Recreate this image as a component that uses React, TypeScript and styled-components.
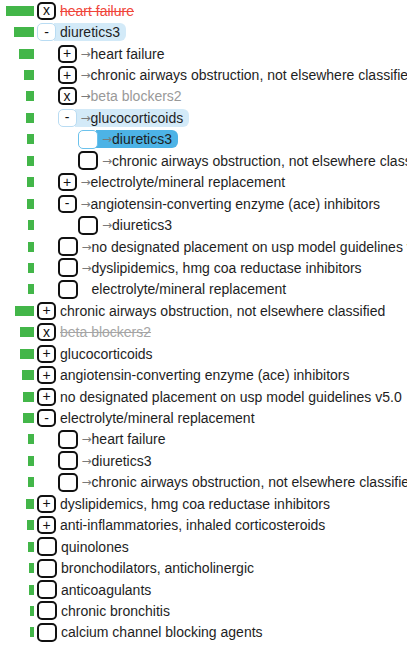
import React from "react";
import styled, { createGlobalStyle, css } from "styled-components";

const Global = createGlobalStyle`
  html, body { margin: 0; padding: 0; background: #ffffff; }
  body { font-family: "Liberation Sans", Arial, Helvetica, sans-serif; }
`;

type Box = "x" | "-" | "+" | "";
type Tone = "normal" | "removed" | "muted" | "mutedStruck";
type Hi = "none" | "light" | "strong";

interface RowData {
  bar: number;
  level: number;
  box: Box;
  label: string;
  arrow?: boolean;
  ghostArrow?: boolean;
  tone?: Tone;
  hi?: Hi;
}

const rows: RowData[] = [
  { bar: 28, level: 0, box: "x", label: "heart failure", tone: "removed" },
  { bar: 20, level: 0, box: "-", label: "diuretics3", hi: "light" },
  { bar: 15, level: 1, box: "+", label: "heart failure", arrow: true },
  { bar: 10, level: 1, box: "+", label: "chronic airways obstruction, not elsewhere classified", arrow: true },
  { bar: 8, level: 1, box: "x", label: "beta blockers2", arrow: true, tone: "muted" },
  { bar: 8, level: 1, box: "-", label: "glucocorticoids", arrow: true, hi: "light" },
  { bar: 7, level: 2, box: "", label: "diuretics3", arrow: true, hi: "strong" },
  { bar: 7, level: 2, box: "", label: "chronic airways obstruction, not elsewhere classified", arrow: true },
  { bar: 7, level: 1, box: "+", label: "electrolyte/mineral replacement", arrow: true },
  { bar: 7, level: 1, box: "-", label: "angiotensin-converting enzyme (ace) inhibitors", arrow: true },
  { bar: 6, level: 2, box: "", label: "diuretics3", arrow: true },
  { bar: 6, level: 1, box: "", label: "no designated placement on usp model guidelines v5.0", arrow: true },
  { bar: 6, level: 1, box: "", label: "dyslipidemics, hmg coa reductase inhibitors", arrow: true },
  { bar: 6, level: 1, box: "", label: "electrolyte/mineral replacement", ghostArrow: true },
  { bar: 19, level: 0, box: "+", label: "chronic airways obstruction, not elsewhere classified" },
  { bar: 14, level: 0, box: "x", label: "beta blockers2", tone: "mutedStruck" },
  { bar: 14, level: 0, box: "+", label: "glucocorticoids" },
  { bar: 12, level: 0, box: "+", label: "angiotensin-converting enzyme (ace) inhibitors" },
  { bar: 11, level: 0, box: "+", label: "no designated placement on usp model guidelines v5.0" },
  { bar: 11, level: 0, box: "-", label: "electrolyte/mineral replacement" },
  { bar: 6, level: 1, box: "", label: "heart failure", arrow: true },
  { bar: 6, level: 1, box: "", label: "diuretics3", arrow: true },
  { bar: 6, level: 1, box: "", label: "chronic airways obstruction, not elsewhere classified", arrow: true },
  { bar: 8, level: 0, box: "+", label: "dyslipidemics, hmg coa reductase inhibitors" },
  { bar: 7, level: 0, box: "+", label: "anti-inflammatories, inhaled corticosteroids" },
  { bar: 6, level: 0, box: "", label: "quinolones" },
  { bar: 5, level: 0, box: "", label: "bronchodilators, anticholinergic" },
  { bar: 5, level: 0, box: "", label: "anticoagulants" },
  { bar: 4, level: 0, box: "", label: "chronic bronchitis" },
  { bar: 4, level: 0, box: "", label: "calcium channel blocking agents" },
];

const Tree = styled.div`
  display: flex;
  flex-direction: column;
  width: 407px;
  overflow: hidden;
`;

const Row = styled.div`
  display: flex;
  align-items: center;
  height: 21.45px;
  white-space: nowrap;
`;

const BarCell = styled.div`
  width: 34px;
  flex: 0 0 34px;
  display: flex;
  justify-content: flex-end;
`;

const Bar = styled.div`
  height: 10px;
  background: #43b649;
`;

const Indent = styled.div<{ $level: number }>`
  flex: 0 0 ${(p) => 3 + p.$level * 20.5}px;
`;

const Toggle = styled.div<{ $empty: boolean; $hi: Hi }>`
  box-sizing: border-box;
  width: ${(p) => (p.$empty ? 20 : 19)}px;
  height: ${(p) => (p.$empty ? 19 : 18)}px;
  flex: 0 0 auto;
  border: 2px solid #111;
  border-radius: 5px;
  background: #fff;
  display: flex;
  align-items: center;
  justify-content: center;
  font-size: 14px;
  line-height: 1;
  padding-bottom: 1px;
  color: #111;
  position: relative;
  z-index: 1;
  ${(p) =>
    p.$hi === "light" &&
    css`
      border: 1.5px solid #b9dcf3;
    `}
  ${(p) =>
    p.$hi === "strong" &&
    css`
      border: 1.5px solid #6cc2ec;
    `}
`;

const Label = styled.div<{ $hi: Hi }>`
  display: flex;
  align-items: center;
  height: 18px;
  margin-left: -2px;
  padding: 0 6px 0 6px;
  border-radius: 0 6px 6px 0;
  font-size: 14px;
  ${(p) =>
    p.$hi === "light" &&
    css`
      background: #d3eaf8;
    `}
  ${(p) =>
    p.$hi === "strong" &&
    css`
      background: #4db3e6;
    `}
`;

const Arrow = styled.span<{ $ghost?: boolean }>`
  font-family: "DejaVu Sans", sans-serif;
  font-size: 12px;
  color: #7a7a7a;
  margin-right: 0px;
  visibility: ${(p) => (p.$ghost ? "hidden" : "visible")};
`;

const Text = styled.span<{ $tone: Tone }>`
  color: #1e1e1e;
  ${(p) =>
    p.$tone === "removed" &&
    css`
      color: #f0453a;
      text-decoration: line-through;
    `}
  ${(p) =>
    p.$tone === "muted" &&
    css`
      color: #999;
    `}
  ${(p) =>
    p.$tone === "mutedStruck" &&
    css`
      color: #a5a5a5;
      text-decoration: line-through;
    `}
`;

export default function App() {
  return (
    <>
      <Global />
      <Tree>
        {rows.map((r, i) => {
          const hi = r.hi ?? "none";
          return (
            <Row key={i}>
              <BarCell>
                <Bar style={{ width: r.bar }} />
              </BarCell>
              <Indent $level={r.level} />
              <Toggle $empty={r.box === ""} $hi={hi}>
                {r.box}
              </Toggle>
              <Label $hi={hi}>
                {(r.arrow || r.ghostArrow) && <Arrow $ghost={r.ghostArrow}>→</Arrow>}
                <Text $tone={r.tone ?? "normal"}>{r.label}</Text>
              </Label>
            </Row>
          );
        })}
      </Tree>
    </>
  );
}
